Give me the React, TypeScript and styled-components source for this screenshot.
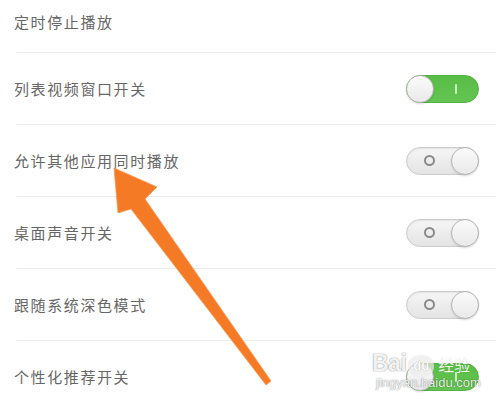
import React from "react";
import styled, { createGlobalStyle, css } from "styled-components";

const Global = createGlobalStyle`
  html, body { margin: 0; padding: 0; background: #ffffff; }
  body { width: 496px; height: 405px; overflow: hidden; }
`;

const Page = styled.div`
  position: relative;
  width: 496px;
  height: 405px;
  overflow: hidden;
  background: #ffffff;
  font-family: "Noto Sans CJK SC", "Noto Sans", sans-serif;
`;

const List = styled.div`
  display: flex;
  flex-direction: column;
`;

const Row = styled.div<{ $compact?: boolean }>`
  box-sizing: border-box;
  display: flex;
  align-items: center;
  justify-content: space-between;
  height: 71px;
  padding: 0 17px 0 14px;
  ${(p) =>
    p.$compact &&
    css`
      height: 52px;
      padding-bottom: 8px;
    `}
`;

const Label = styled.span`
  font-size: 15px;
  letter-spacing: 1.6px;
  color: #666666;
  line-height: 20px;
`;

const Divider = styled.div`
  height: 1px;
  margin-left: 17px;
  background: #ececec;
`;

const Track = styled.div<{ $on: boolean }>`
  position: relative;
  box-sizing: border-box;
  width: 73px;
  height: 28px;
  border-radius: 14px;
  display: flex;
  align-items: center;
  ${(p) =>
    p.$on
      ? css`
          background: linear-gradient(#58bd45, #63c552);
          border: 1px solid #55b143;
          flex-direction: row;
        `
      : css`
          background: linear-gradient(#f6f6f6, #e4e4e4);
          border: 1px solid #cdcdcd;
          box-shadow: inset 0 1px 2px rgba(0, 0, 0, 0.08);
          flex-direction: row-reverse;
        `}
`;

const Knob = styled.div`
  box-sizing: border-box;
  width: 28px;
  height: 28px;
  margin: -1px;
  border-radius: 50%;
  background: linear-gradient(#fbfbfb, #e9e9e9);
  border: 1px solid #b5b5b5;
  box-shadow: 0 1px 2px rgba(0, 0, 0, 0.15);
  flex: none;
`;

const Mark = styled.div`
  flex: 1;
  display: flex;
  align-items: center;
  justify-content: center;
`;

const OnBar = styled.div`
  width: 2px;
  height: 10px;
  background: #c9f0bd;
  border-radius: 1px;
`;

const OffRing = styled.div`
  box-sizing: border-box;
  width: 11px;
  height: 11px;
  border-radius: 50%;
  border: 2px solid #8a8a8a;
`;

const Switch: React.FC<{ on: boolean }> = ({ on }) => (
  <Track $on={on}>
    <Knob />
    <Mark>{on ? <OnBar /> : <OffRing />}</Mark>
  </Track>
);

const ArrowLayer = styled.svg`
  position: absolute;
  left: 0;
  top: 0;
  pointer-events: none;
`;

const Watermark = styled.div`
  position: absolute;
  left: 372px;
  top: 350px;
  display: flex;
  flex-direction: column;
  align-items: flex-start;
  color: rgba(255, 255, 255, 0.92);
  font-family: "Liberation Sans", Arial, sans-serif;
  pointer-events: none;
`;

const MarkTop = styled.div`
  display: flex;
  align-items: center;
  gap: 2px;
`;

const Bai = styled.span`
  font-size: 23px;
  font-weight: 700;
  letter-spacing: -0.5px;
  text-shadow: 0 0 1px rgba(0, 0, 0, 0.45), 0 0 2px rgba(0, 0, 0, 0.2);
`;

const Paw = styled.span`
  position: relative;
  display: flex;
  align-items: center;
  justify-content: center;
  width: 26px;
  height: 22px;
  margin-top: 4px;
  border-radius: 45%;
  background: rgba(235, 235, 235, 0.7);
  font-size: 13px;
  font-weight: 700;
  color: #ffffff;
  text-shadow: 0 0 1px rgba(0, 0, 0, 0.4);
`;

const Jingyan = styled.span`
  margin-left: 2px;
  font-family: "Noto Sans CJK SC", sans-serif;
  font-size: 16px;
  color: rgba(255, 255, 255, 0.95);
  text-shadow: 0 0 1px rgba(0, 0, 0, 0.2);
`;

const Url = styled.span`
  margin-top: -2px;
  margin-left: 4px;
  font-size: 13px;
  color: rgba(255, 255, 255, 0.9);
  text-shadow: 0 0 1px rgba(0, 0, 0, 0.45), 0 0 2px rgba(0, 0, 0, 0.2);
`;

const rows: { label: string; on?: boolean }[] = [
  { label: "列表视频窗口开关", on: true },
  { label: "允许其他应用同时播放", on: false },
  { label: "桌面声音开关", on: false },
  { label: "跟随系统深色模式", on: false },
  { label: "个性化推荐开关", on: true },
];

export default function App() {
  return (
    <Page>
      <Global />
      <List>
        <Row $compact>
          <Label>定时停止播放</Label>
        </Row>
        {rows.map((r) => (
          <React.Fragment key={r.label}>
            <Divider />
            <Row>
              <Label>{r.label}</Label>
              <Switch on={!!r.on} />
            </Row>
          </React.Fragment>
        ))}
      </List>
      <ArrowLayer width="496" height="405" viewBox="0 0 496 405">
        <polygon
          points="114,168 157,187 145,199 271,381 266,385 131,209 118,213"
          fill="#f57a26"
          stroke="#f89a55"
          strokeWidth="0.8"
          strokeLinejoin="round"
        />
      </ArrowLayer>
      <Watermark>
        <MarkTop>
          <Bai>Bai</Bai>
          <Paw>du</Paw>
          <Jingyan>经验</Jingyan>
        </MarkTop>
        <Url>jingyan.baidu.com</Url>
      </Watermark>
    </Page>
  );
}
